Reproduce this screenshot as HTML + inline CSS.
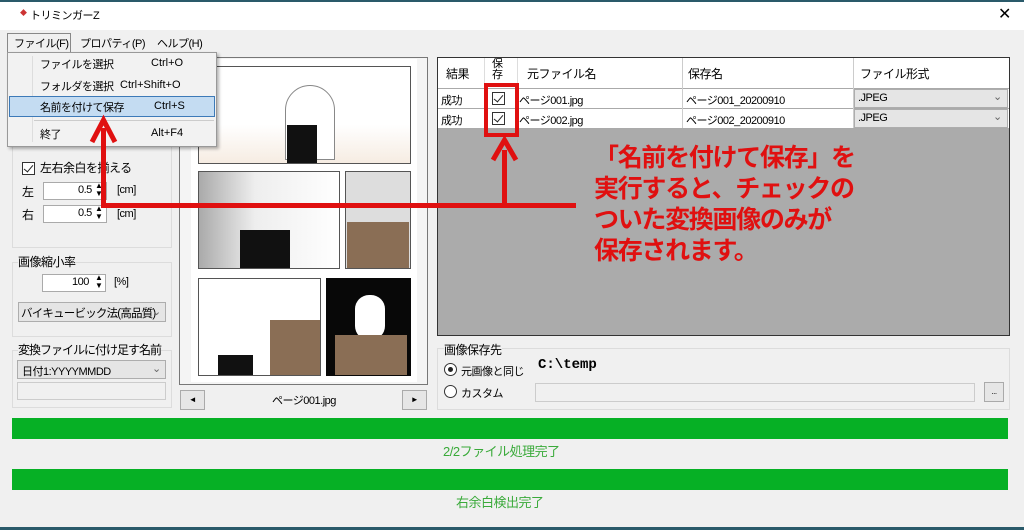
<!DOCTYPE html>
<html><head><meta charset="utf-8"><style>
*{margin:0;padding:0;box-sizing:border-box}
body{width:1024px;height:530px;background:#f0f0f0;font-family:"Liberation Sans","Noto Sans CJK JP",sans-serif;font-size:11px;color:#000;position:relative;overflow:hidden;letter-spacing:-0.5px}
.a{position:absolute}
.t{white-space:nowrap}
.box{border:1px solid #7a7a7a;background:#fff}
.grp{border:1px solid #dcdcdc}
.cmb{background:#e5e5e5;border:1px solid #adadad}
.red{background:#e01010}
.cb{width:13px;height:13px;border:1px solid #333;background:#fff}
.cb:after{content:"";position:absolute;left:3px;top:0px;width:4px;height:8px;border:solid #222;border-width:0 1.5px 1.5px 0;transform:rotate(40deg)}
</style></head><body>
<div class="a" style="left:0;top:0;width:1024px;height:2px;background:#2a5a6a"></div>
<div class="a" style="left:0;top:2px;width:1024px;height:28px;background:#fff"></div>
<div class="a t" style="left:20px;top:8px;font-size:7px;color:#c33">◆</div>
<div class="a t" style="left:30px;top:7px;font-size:11px">トリミンガーZ</div>
<div class="a t" style="left:998px;top:4px;font-size:16px">✕</div>
<div class="a" style="left:7px;top:33px;width:64px;height:20px;border:1px solid #888;border-bottom:none;background:#f0f0f0"></div>
<div class="a t" style="left:14px;top:35px">ファイル(F)</div>
<div class="a t" style="left:80px;top:35px">プロパティ(P)</div>
<div class="a t" style="left:157px;top:35px">ヘルプ(H)</div>
<div class="a grp" style="left:12px;top:145px;width:160px;height:103px"></div>
<div class="a cb" style="left:22px;top:162px"></div>
<div class="a t" style="left:40px;top:159px;font-size:12px">左右余白を揃える</div>
<div class="a t" style="left:22px;top:183px;font-size:12px">左</div>
<div class="a box" style="left:43px;top:182px;width:64px;height:18px;border-color:#aaa"></div>
<div class="a t" style="left:78px;top:184px">0.5</div>
<div class="a t" style="left:95px;top:182px;font-size:8px;line-height:8px">▲<br>▼</div>
<div class="a t" style="left:117px;top:184px">[cm]</div>
<div class="a t" style="left:22px;top:206px;font-size:12px">右</div>
<div class="a box" style="left:43px;top:205px;width:64px;height:18px;border-color:#aaa"></div>
<div class="a t" style="left:78px;top:207px">0.5</div>
<div class="a t" style="left:95px;top:205px;font-size:8px;line-height:8px">▲<br>▼</div>
<div class="a t" style="left:117px;top:208px">[cm]</div>
<div class="a grp" style="left:12px;top:262px;width:160px;height:75px"></div>
<div class="a t" style="left:18px;top:253px;font-size:12px;background:#f0f0f0">画像縮小率</div>
<div class="a box" style="left:42px;top:274px;width:64px;height:18px;border-color:#aaa"></div>
<div class="a t" style="left:72px;top:276px">100</div>
<div class="a t" style="left:95px;top:274px;font-size:8px;line-height:8px">▲<br>▼</div>
<div class="a t" style="left:114px;top:276px">[%]</div>
<div class="a cmb" style="left:18px;top:302px;width:148px;height:20px"></div>
<div class="a t" style="left:21px;top:305px;font-size:11.5px;letter-spacing:-0.8px">バイキュービック法(高品質)</div>
<div class="a t" style="left:152px;top:305px;color:#666">⌄</div>
<div class="a grp" style="left:12px;top:350px;width:160px;height:58px"></div>
<div class="a t" style="left:18px;top:341px;font-size:12px;letter-spacing:-1px;background:#f0f0f0">変換ファイルに付け足す名前</div>
<div class="a cmb" style="left:17px;top:360px;width:149px;height:19px"></div>
<div class="a t" style="left:22px;top:363px">日付1:YYYYMMDD</div>
<div class="a t" style="left:152px;top:362px;color:#666">⌄</div>
<div class="a" style="left:17px;top:382px;width:149px;height:18px;border:1px solid #ccc;background:#f0f0f0"></div>
<div class="a" style="left:179px;top:57px;width:249px;height:328px;border:1px solid #777;background:#f4f4f4"></div>
<div class="a" style="left:191px;top:59px;width:226px;height:323px;background:#fff"></div>
<div class="a" style="left:198px;top:66px;width:213px;height:98px;border:1px solid #555;background:linear-gradient(#fff 60%,#f6ece2)"></div>
<div class="a" style="left:285px;top:85px;width:50px;height:75px;border-radius:25px 25px 0 0;background:#fff;border:1px solid #888"></div>
<div class="a" style="left:287px;top:125px;width:30px;height:38px;background:#111"></div>
<div class="a" style="left:198px;top:171px;width:142px;height:98px;border:1px solid #555;background:linear-gradient(90deg,#aaa,#eee 40%,#fff)"></div>
<div class="a" style="left:240px;top:230px;width:50px;height:38px;background:#111"></div>
<div class="a" style="left:345px;top:171px;width:66px;height:98px;border:1px solid #555;background:#ddd"></div>
<div class="a" style="left:347px;top:222px;width:62px;height:46px;background:#8a6e55"></div>
<div class="a" style="left:198px;top:278px;width:123px;height:98px;border:1px solid #555;background:#fff"></div>
<div class="a" style="left:270px;top:320px;width:50px;height:55px;background:#8a6e55"></div>
<div class="a" style="left:218px;top:355px;width:35px;height:20px;background:#111"></div>
<div class="a" style="left:326px;top:278px;width:85px;height:98px;background:#080808"></div>
<div class="a" style="left:355px;top:295px;width:30px;height:45px;background:#fff;border-radius:14px"></div>
<div class="a" style="left:335px;top:335px;width:72px;height:40px;background:#8a6e55"></div>
<div class="a" style="left:180px;top:390px;width:25px;height:20px;border:1px solid #aaa;background:#e6e6e6;font-size:8px;text-align:center;line-height:18px">◄</div>
<div class="a t" style="left:272px;top:392px">ページ001.jpg</div>
<div class="a" style="left:402px;top:390px;width:25px;height:20px;border:1px solid #aaa;background:#e6e6e6;font-size:8px;text-align:center;line-height:18px">►</div>
<div class="a" style="left:437px;top:57px;width:573px;height:279px;border:1px solid #333;background:#ababab"></div>
<div class="a" style="left:438px;top:58px;width:571px;height:71px;background:#fff"></div>
<div class="a" style="left:438px;top:88px;width:571px;height:1px;background:#aaa"></div>
<div class="a" style="left:438px;top:108px;width:571px;height:1px;background:#aaa"></div>
<div class="a" style="left:438px;top:128px;width:571px;height:1px;background:#aaa"></div>
<div class="a" style="left:484px;top:58px;width:1px;height:70px;background:#ddd"></div>
<div class="a" style="left:517px;top:58px;width:1px;height:70px;background:#ddd"></div>
<div class="a" style="left:682px;top:58px;width:1px;height:70px;background:#ccc"></div>
<div class="a" style="left:853px;top:58px;width:1px;height:70px;background:#ccc"></div>
<div class="a t" style="left:446px;top:65px;font-size:12px">結果</div>
<div class="a t" style="left:492px;top:59px;font-size:11px;line-height:11px">保<br>存</div>
<div class="a t" style="left:527px;top:65px;font-size:12px">元ファイル名</div>
<div class="a t" style="left:688px;top:65px;font-size:12px">保存名</div>
<div class="a t" style="left:860px;top:65px;font-size:12px">ファイル形式</div>
<div class="a t" style="left:441px;top:92px">成功</div>
<div class="a t" style="left:441px;top:112px">成功</div>
<div class="a cb" style="left:492px;top:92px"></div>
<div class="a cb" style="left:492px;top:112px"></div>
<div class="a t" style="left:519px;top:92px">ページ001.jpg</div>
<div class="a t" style="left:519px;top:112px">ページ002.jpg</div>
<div class="a t" style="left:686px;top:92px">ページ001_20200910</div>
<div class="a t" style="left:686px;top:112px">ページ002_20200910</div>
<div class="a cmb" style="left:854px;top:89px;width:154px;height:19px"></div>
<div class="a t" style="left:858px;top:92px">.JPEG</div><div class="a t" style="left:993px;top:90px;color:#666">⌄</div>
<div class="a cmb" style="left:854px;top:109px;width:154px;height:19px"></div>
<div class="a t" style="left:858px;top:112px">.JPEG</div><div class="a t" style="left:993px;top:110px;color:#666">⌄</div>
<div class="a grp" style="left:437px;top:348px;width:573px;height:62px"></div>
<div class="a t" style="left:444px;top:341px;font-size:12px;background:#f0f0f0">画像保存先</div>
<div class="a" style="left:444px;top:363px;width:13px;height:13px;border:1px solid #333;border-radius:50%;background:#fff"></div>
<div class="a" style="left:448px;top:367px;width:5px;height:5px;border-radius:50%;background:#222"></div>
<div class="a t" style="left:461px;top:363px">元画像と同じ</div>
<div class="a t" style="left:538px;top:357px;font-family:'Liberation Mono',monospace;font-weight:bold;font-size:14px;letter-spacing:0">C:\temp</div>
<div class="a" style="left:444px;top:385px;width:13px;height:13px;border:1px solid #333;border-radius:50%;background:#fff"></div>
<div class="a t" style="left:461px;top:385px">カスタム</div>
<div class="a" style="left:535px;top:383px;width:440px;height:19px;border:1px solid #ccc;background:#f0f0f0"></div>
<div class="a" style="left:984px;top:382px;width:20px;height:20px;border:1px solid #aaa;background:#e6e6e6;font-size:8px;text-align:center;line-height:18px">...</div>
<div class="a" style="left:12px;top:418px;width:996px;height:21px;background:#06b025"></div>
<div class="a t" style="left:443px;top:441px;font-size:13px;color:#3aaa3a">2/2ファイル処理完了</div>
<div class="a" style="left:12px;top:469px;width:996px;height:21px;background:#06b025"></div>
<div class="a t" style="left:456px;top:492px;font-size:13px;color:#3aaa3a">右余白検出完了</div>
<div class="a" style="left:0;top:527px;width:1024px;height:3px;background:#2a5a6a"></div>
<div class="a" style="left:7px;top:52px;width:210px;height:95px;background:#f2f2f2;border:1px solid #999;box-shadow:2px 2px 3px rgba(0,0,0,.3)"></div>
<div class="a" style="left:32px;top:56px;width:1px;height:86px;background:#ddd"></div>
<div class="a t" style="left:40px;top:56px">ファイルを選択</div><div class="a t" style="left:151px;top:57px;letter-spacing:0">Ctrl+O</div>
<div class="a t" style="left:40px;top:78px">フォルダを選択</div><div class="a t" style="left:120px;top:79px;letter-spacing:0">Ctrl+Shift+O</div>
<div class="a" style="left:9px;top:96px;width:206px;height:21px;background:#c4dcf2;border:1px solid #3d7ab8"></div>
<div class="a t" style="left:40px;top:99px">名前を付けて保存</div><div class="a t" style="left:154px;top:100px;letter-spacing:0">Ctrl+S</div>
<div class="a" style="left:34px;top:120px;width:180px;height:1px;background:#ccc"></div>
<div class="a t" style="left:40px;top:126px">終了</div><div class="a t" style="left:151px;top:127px;letter-spacing:0">Alt+F4</div>
<div class="a" style="left:484px;top:83px;width:35px;height:54px;border:4px solid #e01010"></div>
<div class="a red" style="left:101px;top:203px;width:475px;height:5px"></div>
<div class="a red" style="left:101px;top:128px;width:5px;height:80px"></div>
<div class="a red" style="left:502px;top:150px;width:5px;height:58px"></div>
<svg class="a" style="left:0;top:0" width="1024" height="530"><path d="M92 142 L103.5 120 L115 142" fill="none" stroke="#e01010" stroke-width="5"/><path d="M493 160 L504.5 140 L516 160" fill="none" stroke="#e01010" stroke-width="5"/></svg>
<div class="a t" style="left:594px;top:143px;font-size:25px;line-height:31px;color:#e01010;font-weight:bold;letter-spacing:-1.3px">「名前を付けて保存」を<br>実行すると、チェックの<br>ついた変換画像のみが<br>保存されます。</div>
</body></html>
